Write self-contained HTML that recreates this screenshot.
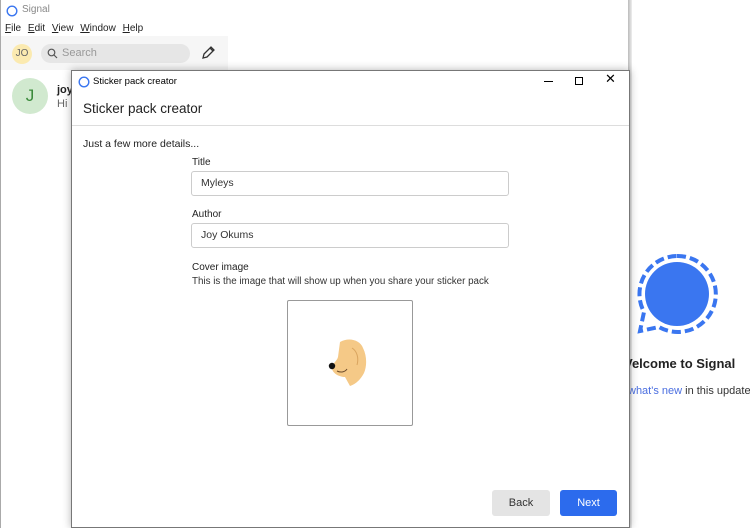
<!DOCTYPE html>
<html><head><style>
body{margin:0;width:750px;height:528px;overflow:hidden;background:#fff;font-family:"Liberation Sans",sans-serif;position:relative}
.a{position:absolute}
*{box-sizing:border-box}
</style></head><body>
<div class="a" style="left:0;top:0;width:1px;height:528px;background:#aaa"></div>
<svg class="a" style="left:6px;top:5px" width="12" height="12"><circle cx="6" cy="6" r="4.8" fill="none" stroke="#3a76f0" stroke-width="1.4"/></svg>
<div class="a" style="left:22px;top:4px;font-size:10px;color:#888">Signal</div>
<div class="a" style="left:5px;top:23px;font-size:10px;color:#222;word-spacing:4px"><u>F</u>ile <u>E</u>dit <u>V</u>iew <u>W</u>indow <u>H</u>elp</div>
<div class="a" style="left:1px;top:36px;width:227px;height:34px;background:#f6f6f6"></div>
<div class="a" style="left:12px;top:44px;width:20px;height:20px;border-radius:50%;background:#fbeab0;font-size:10px;color:#666;text-align:center;line-height:20px">JO</div>
<div class="a" style="left:41px;top:44px;width:149px;height:19px;border-radius:10px;background:#e6e6e6"></div>
<svg class="a" style="left:47px;top:48px" width="11" height="11"><circle cx="4.5" cy="4.5" r="3.3" fill="none" stroke="#555" stroke-width="1.2"/><path d="M7 7l3 3" stroke="#555" stroke-width="1.2"/></svg>
<div class="a" style="left:62px;top:47px;font-size:11px;color:#999">Search</div>
<svg class="a" style="left:200px;top:45px" width="16" height="16"><path d="M3 13l1-4 7-7 3 3-7 7z M10 3l3 3" fill="none" stroke="#333" stroke-width="1.3"/></svg>
<div class="a" style="left:12px;top:78px;width:36px;height:36px;border-radius:50%;background:#d1e9cf;color:#3a8a3a;font-size:17px;text-align:center;line-height:36px">J</div>
<div class="a" style="left:57px;top:84px;font-size:11px;font-weight:bold;color:#222">joy</div>
<div class="a" style="left:57px;top:98px;font-size:11px;color:#666">Hi</div>
<div class="a" style="left:628px;top:0;width:4px;height:528px;background:linear-gradient(90deg,#bbb,#eee)"></div>
<svg class="a" style="left:629px;top:247px" width="100" height="100"><circle cx="48" cy="47" r="32" fill="#3a76f0"/><path d="M48 9a38 38 0 1 1-18 71l-19 4 4-19A38 38 0 0 1 48 9z" fill="none" stroke="#3a76f0" stroke-width="4" stroke-dasharray="9 4"/></svg>
<div class="a" style="left:624px;top:356px;font-size:13px;font-weight:bold;color:#222;white-space:nowrap">Velcome to Signal</div>
<div class="a" style="left:628px;top:385px;font-size:11px;color:#333;white-space:nowrap"><span style="color:#4a6ee0">what's new</span> in this update</div>
<div class="a" style="left:71px;top:70px;width:559px;height:458px;border:1px solid #777;background:#fff;box-shadow:0 0 8px rgba(0,0,0,.3)">
<svg class="a" style="left:6px;top:5px" width="12" height="12"><circle cx="6" cy="6" r="4.8" fill="none" stroke="#3a76f0" stroke-width="1.4"/></svg>
<div class="a" style="left:21px;top:5px;font-size:9.5px;color:#000">Sticker pack creator</div>
<div class="a" style="left:472px;top:10px;width:9px;height:1px;background:#000"></div>
<div class="a" style="left:503px;top:6px;width:8px;height:8px;border:1px solid #000"></div>
<div class="a" style="left:533px;top:0px;font-size:13px;color:#000">✕</div>
<div class="a" style="left:11px;top:30px;font-size:13.5px;color:#222">Sticker pack creator</div>
<div class="a" style="left:0;top:54px;width:557px;height:1px;background:#ddd"></div>
<div class="a" style="left:11px;top:67px;font-size:10.5px;color:#222">Just a few more details...</div>
<div class="a" style="left:120px;top:86px;font-size:10px;color:#222">Title</div>
<div class="a" style="left:119px;top:100px;width:318px;height:25px;border:1px solid #ccc;border-radius:3px;font-size:10.5px;line-height:23px;padding-left:9px;color:#333">Myleys</div>
<div class="a" style="left:120px;top:138px;font-size:10px;color:#222">Author</div>
<div class="a" style="left:119px;top:152px;width:318px;height:25px;border:1px solid #ccc;border-radius:3px;font-size:10.5px;line-height:23px;padding-left:9px;color:#333">Joy Okums</div>
<div class="a" style="left:120px;top:191px;font-size:10px;color:#222">Cover image</div>
<div class="a" style="left:120px;top:205px;font-size:9.8px;color:#333;white-space:nowrap">This is the image that will show up when you share your sticker pack</div>
<div class="a" style="left:215px;top:229px;width:126px;height:126px;border:1px solid #999;border-radius:2px"></div>
<svg class="a" style="left:252px;top:265px" width="54" height="58"><path d="M16 6c9-5 20-2 23 6 4 8 4 18 1 25-3 6-8 11-14 13l-5-9c-6 0-13-4-13-9 0-4 5-7 6-11z" fill="#f5c987"/><path d="M28 12c5 3 7 10 5 17" stroke="#d9a45e" fill="none"/><circle cx="8" cy="30" r="3.2" fill="#111"/><path d="M13 35c4 2 8 1 10-2" stroke="#6b4a2a" fill="none"/></svg>
<div class="a" style="left:420px;top:419px;width:58px;height:26px;background:#e4e4e4;border-radius:3px;font-size:11px;color:#333;text-align:center;line-height:26px">Back</div>
<div class="a" style="left:488px;top:419px;width:57px;height:26px;background:#2c6bed;border-radius:3px;font-size:11px;color:#fff;text-align:center;line-height:26px">Next</div>
</div>
</body></html>
